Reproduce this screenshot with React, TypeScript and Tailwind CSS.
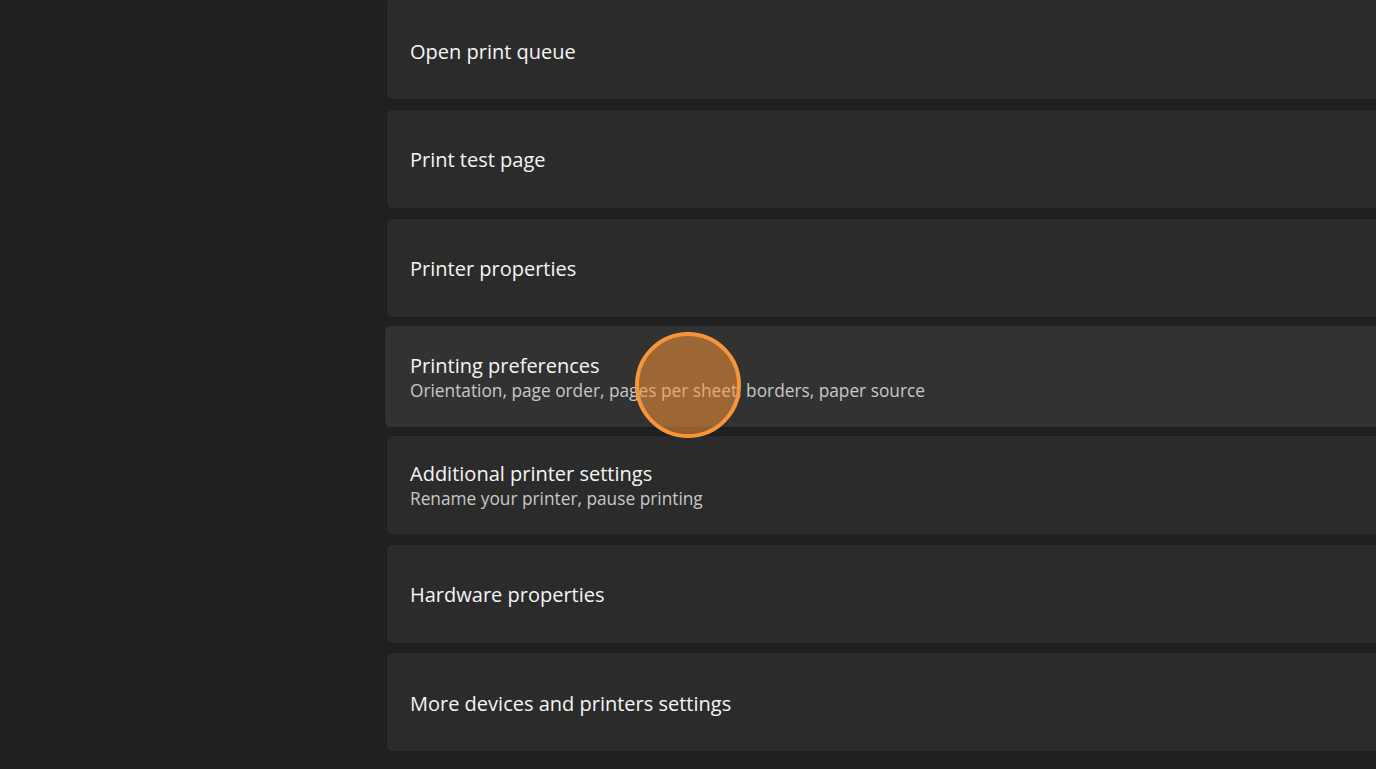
const rows = [
  { title: 'Open print queue', first: true },
  { title: 'Print test page' },
  { title: 'Printer properties' },
  {
    title: 'Printing preferences',
    sub: 'Orientation, page order, pages per sheet, borders, paper source',
    hover: true,
  },
  { title: 'Additional printer settings', sub: 'Rename your printer, pause printing' },
  { title: 'Hardware properties' },
  { title: 'More devices and printers settings' },
]

export default function App() {
  return (
    <div
      className="relative flex h-[769px] w-[1376px] overflow-hidden bg-[#202020] text-white"
      style={{ fontFamily: '"Open Sans", "Noto Sans", sans-serif' }}
    >
      <div className="w-[386px] shrink-0" />
      <div className="mt-[0.33px] -mr-4 flex flex-1 flex-col gap-[8.67px]">
        {rows.map((r) => (
          <div
            key={r.title}
            className={
              r.hover
                ? '-ml-[2px] -my-[1.5px] flex h-[103px] shrink-0 flex-col justify-center rounded-md border border-[#1d1d1d] bg-[#323232] pl-[25px] pt-[3px]'
                : r.first
                  ? '-mt-[3px] flex h-[103px] shrink-0 flex-col justify-center rounded-md border border-[#1d1d1d] bg-[#2b2b2b] pl-[23px] pt-[6px]'
                  : 'flex h-[100px] shrink-0 flex-col justify-center rounded-md border border-[#1d1d1d] bg-[#2b2b2b] pl-[23px] pt-[3px]'
            }
          >
            <div className="text-[20px] leading-[26px] text-[#f5f5f5]">{r.title}</div>
            {r.sub && <div className="text-[17.3px] leading-6 text-[#c8c8c8]">{r.sub}</div>}
          </div>
        ))}
      </div>
      <div className="absolute left-[635px] top-[332px] h-[106px] w-[106px] rounded-full border-4 border-[#f7953a] bg-[rgba(247,148,55,0.54)]" />
    </div>
  )
}
